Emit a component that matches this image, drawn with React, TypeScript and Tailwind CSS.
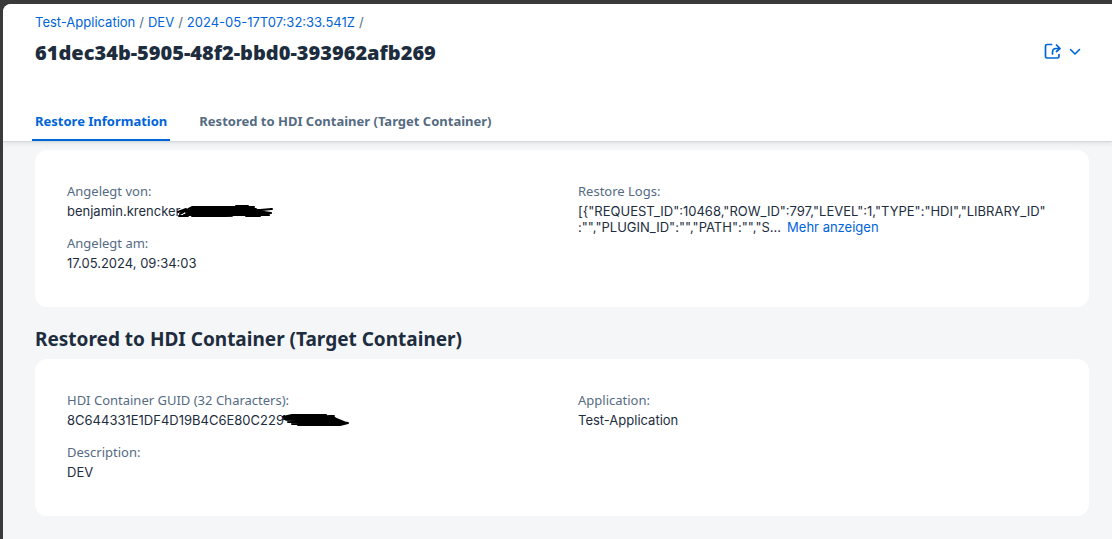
import type { ReactNode } from "react";

function Field({ label, children }: { label: string; children: ReactNode }) {
  return (
    <div className="flex flex-col gap-1">
      <dt className="text-[#556b82]">{label}</dt>
      <dd className="font-['Inter',sans-serif] text-[#1d2d3e]">{children}</dd>
    </div>
  );
}

function Card({ children }: { children: ReactNode }) {
  return (
    <dl className="grid grid-cols-2 gap-x-8 rounded-xl bg-white px-8 pt-[33px] pb-9">
      {children}
    </dl>
  );
}

function Column({ children }: { children: ReactNode }) {
  return <div className="flex min-w-0 flex-col gap-4">{children}</div>;
}

function Redaction({ tail }: { tail: string }) {
  return (
    <svg
      className="absolute top-0 left-full -ml-1 h-4 w-[100px]"
      viewBox="0 0 100 16"
      fill="none"
      stroke="#000"
      strokeLinecap="round"
      strokeLinejoin="round"
      aria-hidden="true"
    >
      <path d={tail} strokeWidth="2" />
    </svg>
  );
}

const mailScribble =
  "M2 9 L10 6 L4 11 L16 4 L78 4 L14 6 L80 6 L8 8 L84 7 L96 6 L74 8 L10 10 L88 9 L95 10 L70 10 L8 12 L86 11 L93 12 L60 12 L16 13 L56 13 M70 13 L84 13 M3 13 L12 13 M14 5 L6 10 M60 3 L72 3";
const guidScribble =
  "M3 5 L12 3 L46 3 L5 5 L54 4 L6 6 L55 6 L4 7 L58 8 L6 8 L60 10 L8 10 L56 11 L12 12 L50 12 L66 11 L54 6 L58 9 L68 11 L60 13 L18 13 L44 13 M4 4 L9 10";

export default function App() {
  return (
    <div className="min-h-screen bg-[#3a3a3a] pt-1 pl-[3px] font-['Noto_Sans','Open_Sans',sans-serif] text-[13px] leading-4">
      <div className="min-h-[calc(100vh-4px)] rounded-tl-lg bg-[#f5f6f7]">
        <header className="relative rounded-tl-lg border-b border-[#d5d8db] bg-white pr-[31px] pl-8 shadow-[0_2px_4px_rgba(85,107,130,0.12)]">
          <nav aria-label="Breadcrumb" className="flex gap-1 pt-[10px] font-['Inter',sans-serif] text-[#556b82]">
            <a href="#app" className="text-[#0064d9]">Test-Application</a>
            <span>/</span>
            <a href="#dev" className="text-[#0064d9]">DEV</a>
            <span>/</span>
            <a href="#backup" className="text-[#0064d9]">2024-05-17T07:32:33.541Z</a>
            <span>/</span>
          </nav>
          <div className="flex items-start justify-between pt-[7px]">
            <h1 className="text-[20px] leading-8 font-black text-[#1d2d3e]">
              61dec34b-5905-48f2-bbd0-393962afb269
            </h1>
            <button type="button" aria-label="Share" className="flex items-center gap-2 pt-[5px] text-[#0064d9]">
              <svg width="18" height="18" viewBox="0 0 18 18" fill="none" stroke="currentColor" strokeWidth="1.7" strokeLinecap="round" strokeLinejoin="round">
                <path d="M8.500 2.500H4Q2.500 2.500 2.500 4V14.500Q2.500 16 4 16H14.500Q16 16 16 14.500V12.500" />
                <path d="M9.500 12V10.500Q9.500 6.500 13 6.500H17M13.500 3L17 6.500L13.500 9.500" />
              </svg>
              <svg width="12" height="18" viewBox="0 0 12 18" fill="none" stroke="currentColor" strokeWidth="1.6" strokeLinecap="round" strokeLinejoin="round">
                <path d="M1.500 7.500L6 12L10.500 7.500" />
              </svg>
            </button>
          </div>
          <div role="tablist" className="-ml-[3px] flex gap-[26px] pt-9 font-bold">
            <button type="button" role="tab" aria-selected="true" className="border-b-2 border-[#0064d9] px-[3px] pt-2 pb-[10px] text-[#0064d9]">
              Restore Information
            </button>
            <button type="button" role="tab" aria-selected="false" className="border-b-2 border-transparent px-[3px] pt-2 pb-[10px] text-[#556b82]">
              Restored to HDI Container (Target Container)
            </button>
          </div>
        </header>
        <main className="pt-2 pr-[23px] pb-[23px] pl-8">
          <Card>
            <Column>
              <Field label="Angelegt von:">
                <span className="relative">
                  benjamin.krencker
                  <Redaction tail={mailScribble} />
                </span>
              </Field>
              <Field label="Angelegt am:">17.05.2024, 09:34:03</Field>
            </Column>
            <Column>
              <Field label="Restore Logs:">
                <span className="block">{'[{"REQUEST_ID":10468,"ROW_ID":797,"LEVEL":1,"TYPE":"HDI","LIBRARY_ID"'}</span>
                <span className="flex gap-[6px]">
                  <span>{':"","PLUGIN_ID":"","PATH":"","S...'}</span>
                  <a href="#more" className="text-[#0064d9]">Mehr anzeigen</a>
                </span>
              </Field>
            </Column>
          </Card>
          <h2 className="pt-5 pb-2 text-[19px] leading-6 font-bold text-[#1d2d3e]">
            Restored to HDI Container (Target Container)
          </h2>
          <Card>
            <Column>
              <Field label="HDI Container GUID (32 Characters):">
                <span className="relative">
                  8C644331E1DF4D19B4C6E80C229
                  <Redaction tail={guidScribble} />
                </span>
              </Field>
              <Field label="Description:">DEV</Field>
            </Column>
            <Column>
              <Field label="Application:">Test-Application</Field>
            </Column>
          </Card>
        </main>
      </div>
    </div>
  );
}
